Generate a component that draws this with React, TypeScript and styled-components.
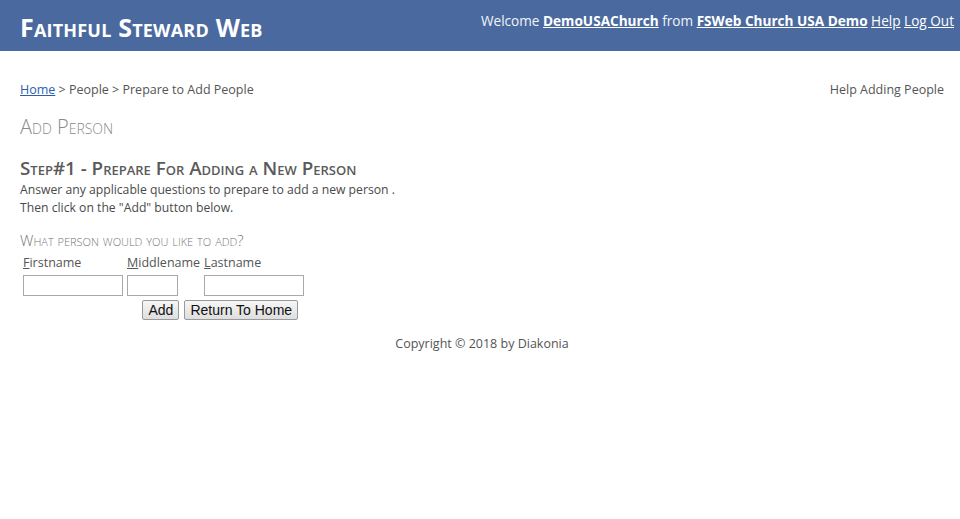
import styled, { createGlobalStyle } from 'styled-components'

const GlobalStyle = createGlobalStyle`
  html, body {
    margin: 0;
    padding: 0;
    background: #fff;
  }
  body {
    font-family: "Open Sans", "Noto Sans", sans-serif;
    font-size: 12.5px;
    color: #555;
  }
`

const Header = styled('header')`
  display: flex;
  align-items: center;
  justify-content: space-between;
  height: 51px;
  padding: 0 6px 0 20px;
  background: #4a6a9f;
  color: #fff;
`
const Brand = styled('div')`
  font-family: "Open Sans", sans-serif;
  font-size: 25px;
  font-weight: 700;
  font-variant: small-caps;
  letter-spacing: 0.2px;
  padding-top: 2px;
`
const Welcome = styled('div')`
  font-size: 13.6px;
  padding-bottom: 10px;
  color: #f2f4f8;

  a {
    color: #fff;
  }
  b a {
    font-weight: 700;
  }
`
const Main = styled('main')`
  padding: 30px 16px 0 20px;
`
const Crumbs = styled('div')`
  display: flex;
  justify-content: space-between;
  line-height: 18px;

  a {
    color: #2a5db0;
  }
`
const PageTitle = styled('h1')`
  margin: 16px 0 0;
  font-size: 20px;
  font-weight: 300;
  font-variant: small-caps;
  color: #8a8a8a;
  line-height: 24px;
`
const StepTitle = styled('h2')`
  margin: 18px 0 0;
  font-size: 18.8px;
  font-weight: 600;
  font-variant: small-caps;
  color: #5a5a5a;
  line-height: 22px;
`
const Notes = styled('div')`
  margin-top: 2px;
`
const Note = styled('p')`
  margin: 0;
  font-size: 12.2px;
  line-height: 18px;
  color: #4a4a4a;
`
const Question = styled('h3')`
  margin: 14px 0 0;
  font-size: 15px;
  font-weight: 300;
  font-variant: small-caps;
  color: #777;
  line-height: 18px;
`
const NameGrid = styled('div')`
  display: grid;
  grid-template-columns: auto auto auto;
  justify-content: start;
  column-gap: 4px;
  row-gap: 4px;
  padding-left: 3px;
  margin-top: 6px;
`
const Label = styled('label')`
  line-height: 16px;
  color: #555;
`
const Field = styled('input')<{ $w: number }>`
  width: ${p => p.$w}px;
  height: 21px;
  box-sizing: border-box;
  border: 1px solid #a9a9a9;
  padding: 1px 2px;
  font-size: 13px;
`
const Actions = styled('div')`
  grid-column: 1 / 4;
  display: flex;
  justify-content: flex-end;
  gap: 5px;
  padding-right: 6px;
`
const Button = styled('button')`
  height: 20px;
  padding: 0 5px;
  font-family: "Liberation Sans", Arial, sans-serif;
  font-size: 14px;
  color: #111;
  background: linear-gradient(#f6f6f6, #dedede);
  border: 1px solid #9a9a9a;
  border-radius: 2px;
`
const Footer = styled('footer')`
  margin-top: 15px;
  text-align: center;
  line-height: 18px;
  color: #555;
`

const Accel = ({ k, rest }: { k: string; rest: string }) => (
  <>
    <u>{k}</u>
    {rest}
  </>
)

export default function App() {
  return (
    <>
      <GlobalStyle />
      <Header>
        <Brand>Faithful Steward Web</Brand>
        <Welcome>
          Welcome <b><a href='#'>DemoUSAChurch</a></b> from <b><a href='#'>FSWeb Church USA Demo</a></b>{' '}
          <a href='#'>Help</a> <a href='#'>Log Out</a>
        </Welcome>
      </Header>
      <Main>
        <Crumbs>
          <span><a href='#'>Home</a> &gt; People &gt; Prepare to Add People</span>
          <span>Help Adding People</span>
        </Crumbs>
        <PageTitle>Add Person</PageTitle>
        <StepTitle>Step#1 - Prepare For Adding a New Person</StepTitle>
        <Notes>
          <Note>Answer any applicable questions to prepare to add a new person .</Note>
          <Note>Then click on the "Add" button below.</Note>
        </Notes>
        <Question>What person would you like to add?</Question>
        <NameGrid>
          <Label><Accel k='F' rest='irstname' /></Label>
          <Label><Accel k='M' rest='iddlename' /></Label>
          <Label><Accel k='L' rest='astname' /></Label>
          <Field $w={100} />
          <Field $w={51} />
          <Field $w={100} />
          <Actions>
            <Button>Add</Button>
            <Button>Return To Home</Button>
          </Actions>
        </NameGrid>
        <Footer>Copyright © 2018 by Diakonia</Footer>
      </Main>
    </>
  )
}
